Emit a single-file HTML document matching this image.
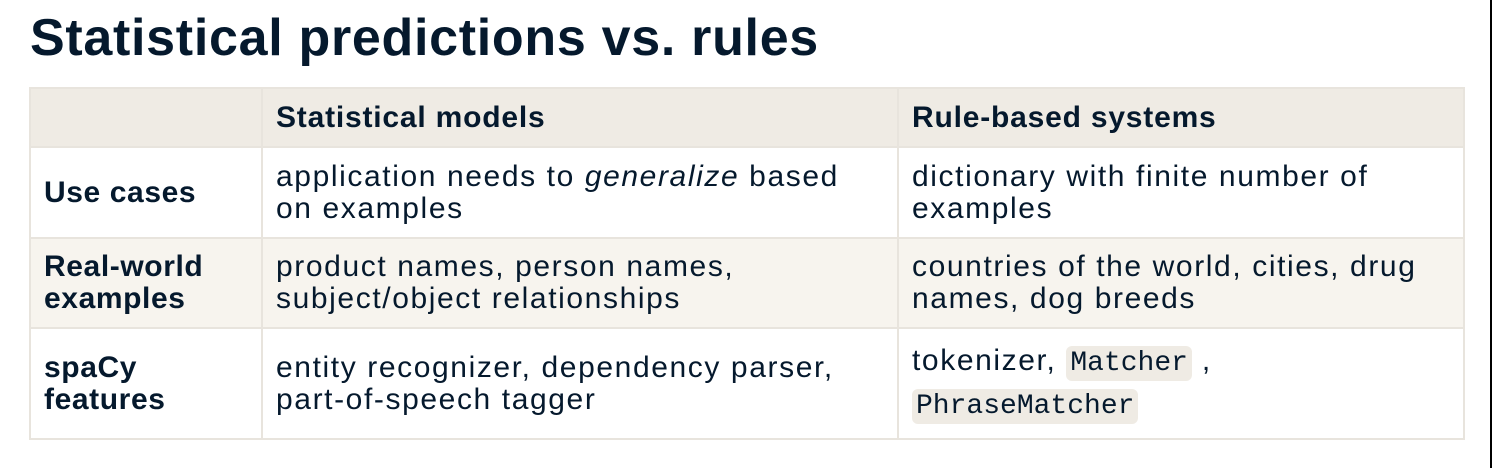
<!DOCTYPE html>
<html><head><style>
body{margin:0;width:1492px;height:468px;background:#fff;position:relative;overflow:hidden;font-family:"Liberation Sans",sans-serif;color:#05192d}
h1{position:absolute;left:30px;top:8px;margin:0;font-size:52px;font-weight:bold;letter-spacing:0.7px;white-space:nowrap}
.strip{position:absolute;right:0;top:0;width:2px;height:468px;background:#000}
table{position:absolute;left:29px;top:87px;border-collapse:collapse;font-size:30px;line-height:32px;letter-spacing:1.6px;table-layout:fixed;width:1434px}
td{border:2px solid #e8e4dd;padding:0 13px;vertical-align:middle;white-space:nowrap;overflow:visible}
tr.h td{background:#efebe4;font-weight:bold;height:57px;letter-spacing:0.8px}
tr.a td{background:#f7f4ee}
b{font-weight:bold;letter-spacing:0.6px}
code{font-family:"Liberation Mono",monospace;font-size:28px;letter-spacing:0;background:#efebe4;border-radius:6px;padding:2px 4px}
</style></head><body>
<h1>Statistical predictions vs. rules</h1>
<div class="strip"></div>
<table>
<colgroup><col style="width:232px"><col style="width:636px"><col style="width:566px"></colgroup>
<tr class="h"><td></td><td>Statistical models</td><td>Rule-based systems</td></tr>
<tr style="height:91px"><td><b>Use cases</b></td><td>application needs to <i>generalize</i> based<br>on examples</td><td>dictionary with finite number of<br>examples</td></tr>
<tr class="a" style="height:90px"><td><b>Real-world<br>examples</b></td><td>product names, person names,<br>subject/object relationships</td><td>countries of the world, cities, drug<br>names, dog breeds</td></tr>
<tr style="height:111px"><td><b>spaCy<br>features</b></td><td>entity recognizer, dependency parser,<br>part-of-speech tagger</td><td style="line-height:40px">tokenizer, <code>Matcher</code> ,<br><code>PhraseMatcher</code></td></tr>
</table>
</body></html>
